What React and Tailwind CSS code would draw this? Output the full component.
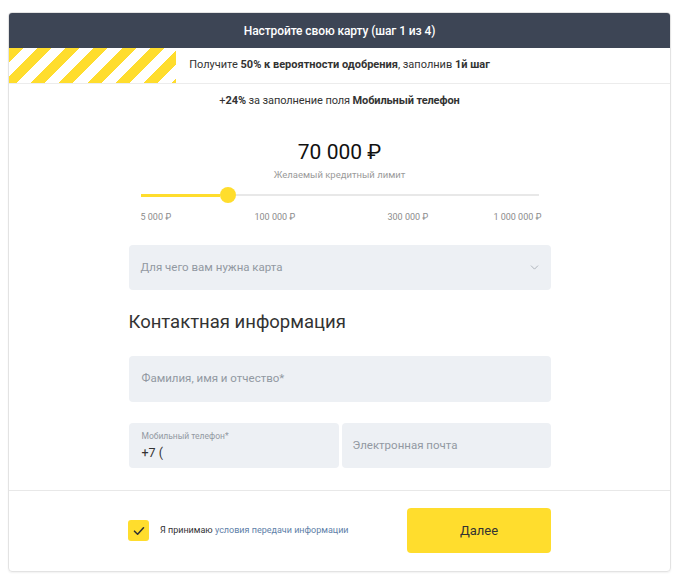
import React from 'react';
import { ChevronDown } from 'lucide-react';

const Field = ({ placeholder, className = '' }) => (
  <div className={`h-[46px] rounded-[4px] bg-[#edf0f4] flex items-center text-[11.5px] text-[#9299a2] ${className}`}>
    {placeholder}
  </div>
);

const App = () => {
  return (
    <div className="min-h-[583px] bg-white pt-3 pl-2 font-['Roboto',sans-serif] text-[#333]">
      <div className="w-[663px] rounded-[4px] border border-[#e3e3e3] shadow-[0_1px_2px_rgba(0,0,0,0.06)] overflow-hidden">
        {/* header */}
        <div className="h-[35px] bg-[#3d4555] flex items-center justify-center text-white text-[12px] font-medium tracking-[-0.1px]">
          Настройте свою карту (шаг 1 из 4)
        </div>

        {/* progress strip */}
        <div className="relative h-[36px] border-b border-[#ececec] flex items-center justify-center">
          <div className="absolute left-0 top-0 h-full w-[167px] bg-[repeating-linear-gradient(135deg,#ffdd2d_0_10px,#fff_10px_20px)]" />
          <div className="text-[11px] text-[#333]">
            Получите <b className="font-bold">50% к вероятности одобрения</b>, заполнив <b className="font-bold">1й шаг</b>
          </div>
        </div>

        {/* body */}
        <div className="flex flex-col items-center">
          <div className="mt-[9px] text-[11px] leading-[16px] tracking-[-0.1px]">
            +<b className="font-bold">24%</b> за заполнение поля <b className="font-bold">Мобильный телефон</b>
          </div>

          <div className="mt-[29px] text-[21px] leading-[28px] text-[#111]">70 000 ₽</div>
          <div className="mt-[2px] text-[9.5px] leading-[14px] text-[#9a9a9a]">Желаемый кредитный лимит</div>

          <div className="w-[422px]">
            {/* slider */}
            <div className="mt-[5px] mx-[12px] h-[16px] flex items-center">
              <div className="w-[79px] h-[3px] bg-[#ffdd2d]" />
              <div className="w-[16px] h-[16px] rounded-full bg-[#ffdd2d] shrink-0" />
              <div className="flex-1 h-[2px] bg-[#e8e8e8]" />
            </div>
            <div className="mt-[8px] ml-[12px] mr-[9px] flex text-[9px] leading-[12px] text-[#8c8c8c]">
              <div className="w-[114px]">5 000 ₽</div>
              <div className="w-[133px]">100 000 ₽</div>
              <div>300 000 ₽</div>
              <div className="flex-1 text-right">1 000 000 ₽</div>
            </div>

            {/* select */}
            <div className="mt-[22px] h-[45px] rounded-[4px] bg-[#edf0f4] flex items-center justify-between pl-[12px] pr-[10px] text-[11.5px] text-[#9299a2]">
              <span>Для чего вам нужна карта</span>
              <ChevronDown size={13} strokeWidth={1.5} className="text-[#a0a6ae]" />
            </div>

            <div className="mt-[18px] text-[18.5px] leading-[28px] text-[#333]">Контактная информация</div>

            <Field placeholder="Фамилия, имя и отчество*" className="mt-[20px] px-[13px]" />

            <div className="mt-[21px] flex gap-[3px]">
              <div className="w-[210px] h-[45px] rounded-[4px] bg-[#edf0f4] flex flex-col justify-center px-[13px]">
                <div className="text-[8.5px] leading-[11px] text-[#9299a2]">Мобильный телефон*</div>
                <div className="mt-[3px] text-[12.5px] leading-[15px] text-[#333]">+7 (</div>
              </div>
              <Field placeholder="Электронная почта" className="flex-1 !h-[45px] px-[11px]" />
            </div>
          </div>
        </div>

        {/* footer */}
        <div className="mt-[22px] border-t border-[#e8e8e8] pt-[17px] pb-[18px] flex justify-center">
          <div className="w-[423px] flex items-center justify-between">
            <div className="flex items-center">
              <div className="w-[21px] h-[21px] rounded-[3px] bg-[#ffdd2d] flex items-center justify-center">
                <svg width="12" height="10" viewBox="0 0 12 10" fill="none">
                  <path d="M1.5 5.2 L4.6 8.2 L10.5 1.8" stroke="#333" strokeWidth="1.6" strokeLinecap="round" strokeLinejoin="round" />
                </svg>
              </div>
              <div className="ml-[11px] text-[9px] text-[#333]">
                Я принимаю <span className="text-[#5e80a8]">условия передачи информации</span>
              </div>
            </div>
            <div className="w-[144px] h-[45px] rounded-[4px] bg-[#ffdd2d] flex items-center justify-center text-[13px] text-[#333]">
              Далее
            </div>
          </div>
        </div>
      </div>
    </div>
  );
};

export default App;
